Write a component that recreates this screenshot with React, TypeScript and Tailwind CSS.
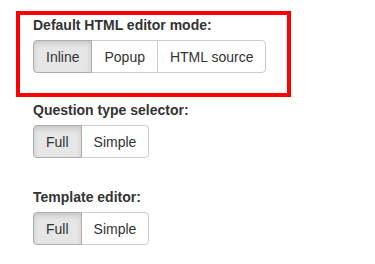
import React, { useState } from 'react';

type ToggleGroupProps = {
  options: string[];
};

const ToggleGroup: React.FC<ToggleGroupProps> = ({ options }) => {
  const [active, setActive] = useState(0);
  return (
    <div className="flex">
      {options.map((opt, i) => {
        const isActive = i === active;
        return (
          <button
            key={opt}
            type="button"
            onClick={() => setActive(i)}
            className={[
              'h-[33px] px-[12px] text-[14px] text-[#333] border leading-[20px]',
              i === 0 ? 'rounded-l-[4px]' : '-ml-px',
              i === options.length - 1 ? 'rounded-r-[4px]' : '',
              isActive
                ? 'bg-[#e6e6e6] border-[#adadad] shadow-[inset_0_3px_5px_rgba(0,0,0,0.125)] z-10'
                : 'bg-white border-[#ccc]',
            ].join(' ')}
          >
            {opt}
          </button>
        );
      })}
    </div>
  );
};

const Field: React.FC<{ label: string; options: string[] }> = ({ label, options }) => (
  <div>
    <div className="text-[14px] font-bold leading-[20px] text-[#333] mb-[5px]">{label}</div>
    <ToggleGroup options={options} />
  </div>
);

export default function App() {
  return (
    <div className="w-[375px] h-[264px] bg-white font-['Liberation_Sans',Arial,sans-serif] pt-[11px]">
      <div className="ml-[16px] w-[275px] border-4 border-[#ff0000] pl-[13px] pb-[20px]">
        <Field label="Default HTML editor mode:" options={['Inline', 'Popup', 'HTML source']} />
      </div>
      <div className="pl-[33px] pt-[3px]">
        <Field label="Question type selector:" options={['Full', 'Simple']} />
        <div className="mt-[29px]">
          <Field label="Template editor:" options={['Full', 'Simple']} />
        </div>
      </div>
    </div>
  );
}
